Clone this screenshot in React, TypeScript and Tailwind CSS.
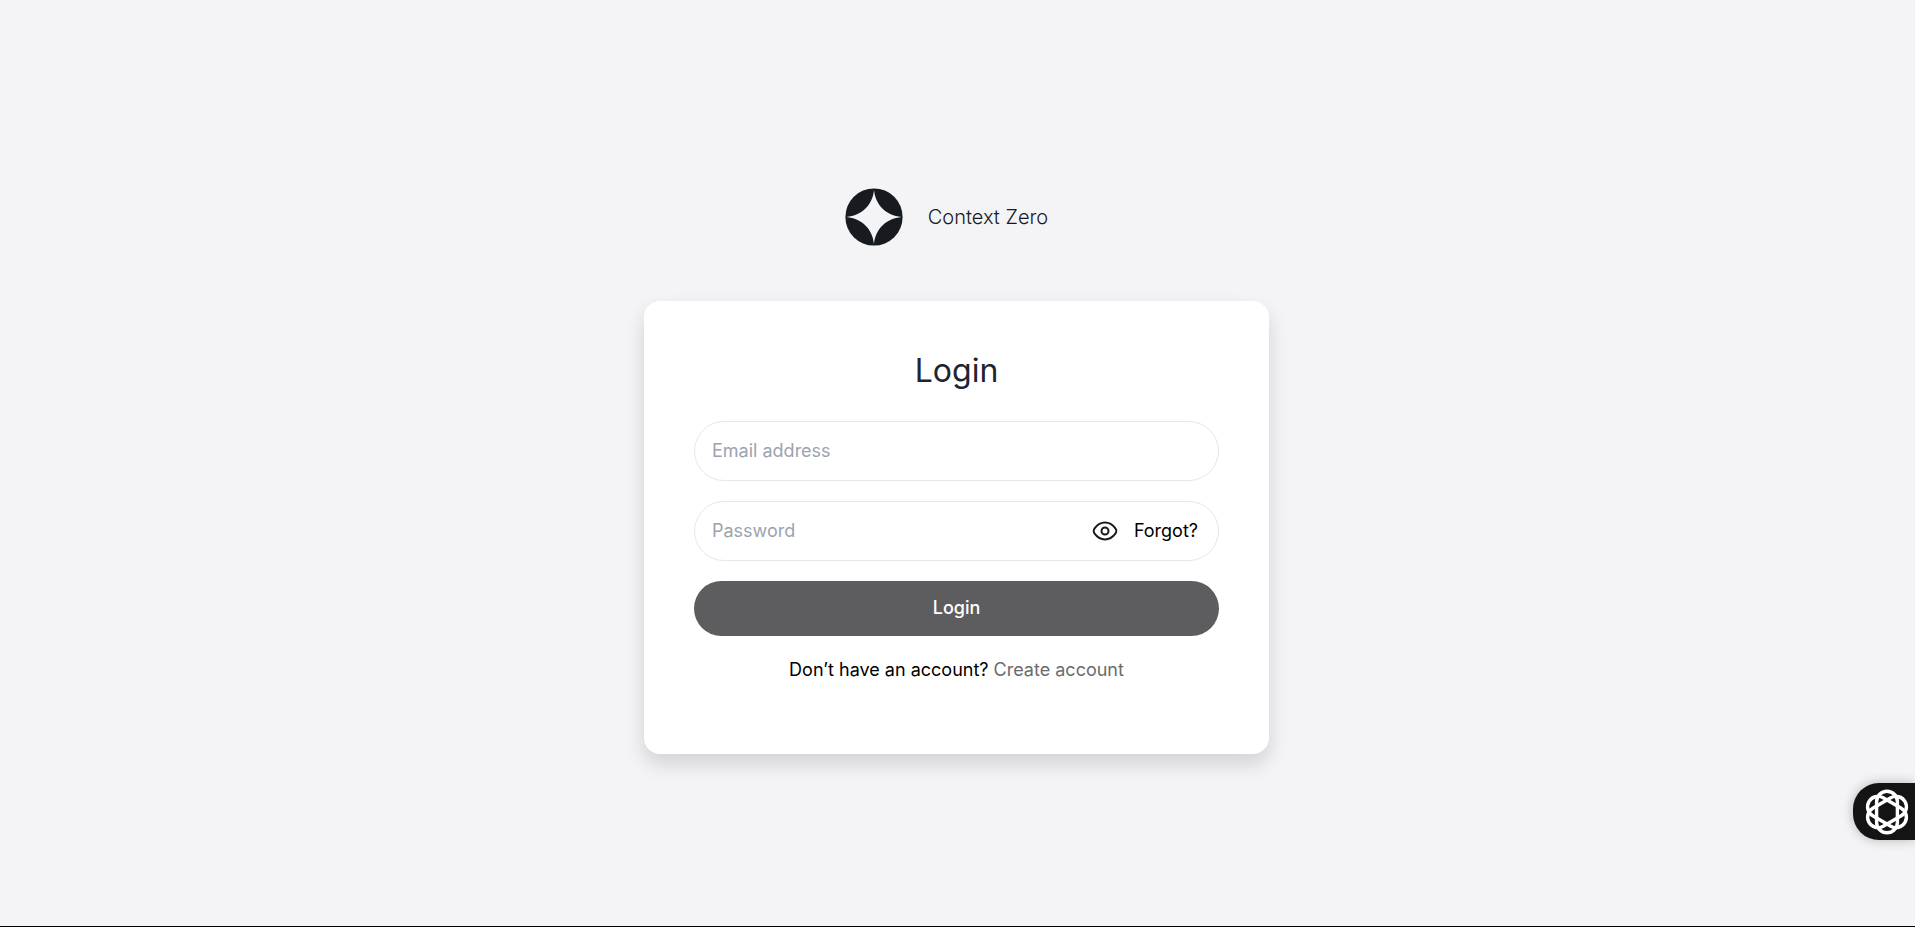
import { useState } from "react";

function StarLogo() {
  return (
    <svg className="size-[58px]" viewBox="0 0 58 58" aria-hidden="true">
      <circle cx="29" cy="29" r="28.6" fill="#171b1f" />
      <path
        d="M29 2C30.5 17 41 27.5 56.5 29C41 30.5 30.5 41 29 56C27.5 41 17 30.5 1.5 29C17 27.5 27.5 17 29 2Z"
        fill="#f4f4f6"
      />
    </svg>
  );
}

function EyeIcon() {
  return (
    <svg className="size-[26px]" viewBox="0 0 26 26" fill="none" stroke="#1a1a1a" strokeWidth="2" aria-hidden="true">
      <path
        d="M2.6 15.6C1.4 14.2 1.4 11.8 2.6 10.4C5 7.2 8.6 4.6 13 4.6S21 7.2 23.4 10.4C24.6 11.8 24.6 14.2 23.4 15.6C21 18.8 17.4 21.4 13 21.4S5 18.8 2.6 15.6Z"
      />
      <circle cx="13" cy="13" r="3.5" />
    </svg>
  );
}

function KnotIcon() {
  return (
    <svg className="size-[46px]" viewBox="-23 -23 46 46" fill="none" stroke="#fff" strokeWidth="3.4" aria-hidden="true">
      <rect x="-10.4" y="-20.8" width="20.8" height="41.6" rx="10.4" />
      <rect x="-10.4" y="-20.8" width="20.8" height="41.6" rx="10.4" transform="rotate(60)" />
      <rect x="-10.4" y="-20.8" width="20.8" height="41.6" rx="10.4" transform="rotate(120)" />
    </svg>
  );
}

export default function App() {
  const [visible, setVisible] = useState(false);

  return (
    <div className="flex min-h-screen flex-col items-center justify-center border-b border-black bg-[#f4f4f6] pr-0.5 font-['Inter',sans-serif] text-lg text-black">
      <header className="mb-[55px] flex items-center gap-[25px] pt-[15px] pr-5">
        <StarLogo />
        <span className="text-xl font-light text-[#171b1f]">Context Zero</span>
      </header>

      <main className="w-full max-w-[625px] rounded-2xl bg-white px-[50px] pt-[50px] pb-[70px] shadow-[0_10px_20px_rgba(0,0,0,0.14)]">
        <h1 className="mb-[30px] text-center text-[32px] leading-10 text-[#1c2530]">Login</h1>
        <form className="flex flex-col gap-5" onSubmit={(event) => event.preventDefault()}>
          <input
            type="email"
            aria-label="Email address"
            placeholder="Email address"
            className="h-[60px] w-full rounded-full border border-gray-200 px-[17px] outline-none placeholder:text-[#9ca3af]"
          />
          <div className="flex h-[60px] items-center rounded-full border border-gray-200 pr-5 pl-[17px]">
            <input
              type={visible ? "text" : "password"}
              aria-label="Password"
              placeholder="Password"
              className="min-w-0 flex-1 outline-none placeholder:text-[#9ca3af]"
            />
            <button type="button" aria-label="Show password" className="mr-4" onClick={() => setVisible(!visible)}>
              <EyeIcon />
            </button>
            <a href="#forgot">Forgot?</a>
          </div>
          <button type="submit" className="h-[55px] rounded-full bg-[#5d5d5f] font-medium text-white">
            Login
          </button>
          <p className="text-center leading-7">
            Don’t have an account?{" "}
            <a href="#create" className="text-[#6b6b6b]">
              Create account
            </a>
          </p>
        </form>
      </main>

      <button
        type="button"
        aria-label="Open assistant"
        className="fixed right-0 bottom-[87px] flex h-[57px] w-[62px] items-center rounded-l-[26px] bg-[#141414] pl-[11px] shadow-[0_0_12px_rgba(0,0,0,0.25)]"
      >
        <KnotIcon />
      </button>
    </div>
  );
}
